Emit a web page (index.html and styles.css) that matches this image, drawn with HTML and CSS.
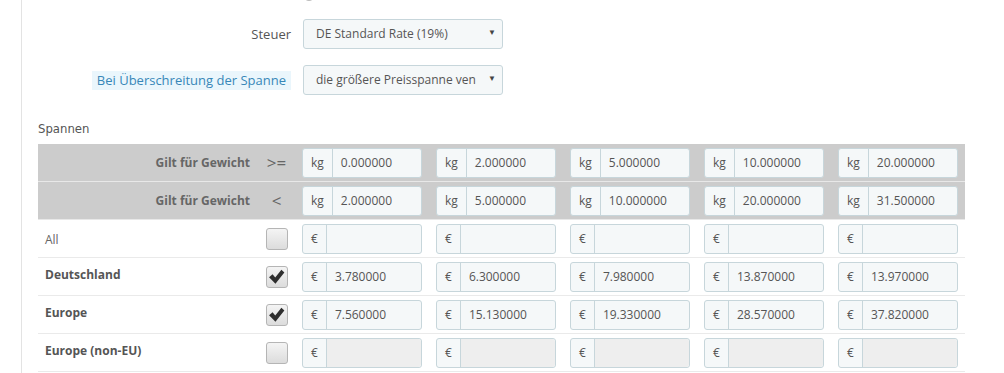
FILE: index.html
```html
<!DOCTYPE html>
<html lang="de">
<head>
    <meta charset="UTF-8">
    <title>Versandkosten</title>
    <link rel="stylesheet" href="styles.css">
</head>
<body>

<div class="panel">
    <div class="form-row radio-row">
        <div class="form-label"></div>
        <div class="form-control">
            <span class="radio"></span>
            <span class="radio-text">Versandkosten nach Gewicht</span>
        </div>
    </div>

    <div class="form-row">
        <div class="form-label">Steuer</div>
        <div class="form-control">
            <div class="select">DE Standard Rate (19%)<span class="caret">&#9660;</span></div>
        </div>
    </div>

    <div class="form-row">
        <div class="form-label"><span class="label-tooltip">Bei Überschreitung der Spanne</span></div>
        <div class="form-control">
            <div class="select">die größere Preisspanne ven<span class="caret">&#9660;</span></div>
        </div>
    </div>

    <h3 class="section-title">Spannen</h3>

    <div class="ranges">
        <div class="range-row head">
            <div class="cell-label">Gilt für Gewicht</div>
            <div class="cell-op">&gt;=</div>
            <div class="cell"><div class="input-group"><span class="addon">kg</span><span class="field">0.000000</span></div></div>
            <div class="cell"><div class="input-group"><span class="addon">kg</span><span class="field">2.000000</span></div></div>
            <div class="cell"><div class="input-group"><span class="addon">kg</span><span class="field">5.000000</span></div></div>
            <div class="cell"><div class="input-group"><span class="addon">kg</span><span class="field">10.000000</span></div></div>
            <div class="cell"><div class="input-group"><span class="addon">kg</span><span class="field">20.000000</span></div></div>
        </div>
        <div class="range-row head">
            <div class="cell-label">Gilt für Gewicht</div>
            <div class="cell-op">&lt;</div>
            <div class="cell"><div class="input-group"><span class="addon">kg</span><span class="field">2.000000</span></div></div>
            <div class="cell"><div class="input-group"><span class="addon">kg</span><span class="field">5.000000</span></div></div>
            <div class="cell"><div class="input-group"><span class="addon">kg</span><span class="field">10.000000</span></div></div>
            <div class="cell"><div class="input-group"><span class="addon">kg</span><span class="field">20.000000</span></div></div>
            <div class="cell"><div class="input-group"><span class="addon">kg</span><span class="field">31.500000</span></div></div>
        </div>

        <div class="range-row">
            <div class="cell-label zone all">All</div>
            <div class="cell-check"><span class="checkbox"></span></div>
            <div class="cell"><div class="input-group"><span class="addon">€</span><span class="field"></span></div></div>
            <div class="cell"><div class="input-group"><span class="addon">€</span><span class="field"></span></div></div>
            <div class="cell"><div class="input-group"><span class="addon">€</span><span class="field"></span></div></div>
            <div class="cell"><div class="input-group"><span class="addon">€</span><span class="field"></span></div></div>
            <div class="cell"><div class="input-group"><span class="addon">€</span><span class="field"></span></div></div>
        </div>
        <div class="range-row">
            <div class="cell-label zone">Deutschland</div>
            <div class="cell-check"><span class="checkbox"><svg viewBox="0 0 16 16" width="17" height="17"><path d="M1 8.8 L4.3 5.8 L6.8 9 L12.6 1.6 L15.4 4.2 L7 14.8 Z" fill="#2e2e2e"/></svg></span></div>
            <div class="cell"><div class="input-group"><span class="addon">€</span><span class="field">3.780000</span></div></div>
            <div class="cell"><div class="input-group"><span class="addon">€</span><span class="field">6.300000</span></div></div>
            <div class="cell"><div class="input-group"><span class="addon">€</span><span class="field">7.980000</span></div></div>
            <div class="cell"><div class="input-group"><span class="addon">€</span><span class="field">13.870000</span></div></div>
            <div class="cell"><div class="input-group"><span class="addon">€</span><span class="field">13.970000</span></div></div>
        </div>
        <div class="range-row">
            <div class="cell-label zone">Europe</div>
            <div class="cell-check"><span class="checkbox"><svg viewBox="0 0 16 16" width="17" height="17"><path d="M1 8.8 L4.3 5.8 L6.8 9 L12.6 1.6 L15.4 4.2 L7 14.8 Z" fill="#2e2e2e"/></svg></span></div>
            <div class="cell"><div class="input-group"><span class="addon">€</span><span class="field">7.560000</span></div></div>
            <div class="cell"><div class="input-group"><span class="addon">€</span><span class="field">15.130000</span></div></div>
            <div class="cell"><div class="input-group"><span class="addon">€</span><span class="field">19.330000</span></div></div>
            <div class="cell"><div class="input-group"><span class="addon">€</span><span class="field">28.570000</span></div></div>
            <div class="cell"><div class="input-group"><span class="addon">€</span><span class="field">37.820000</span></div></div>
        </div>
        <div class="range-row">
            <div class="cell-label zone">Europe (non-EU)</div>
            <div class="cell-check"><span class="checkbox"></span></div>
            <div class="cell"><div class="input-group disabled"><span class="addon">€</span><span class="field"></span></div></div>
            <div class="cell"><div class="input-group disabled"><span class="addon">€</span><span class="field"></span></div></div>
            <div class="cell"><div class="input-group disabled"><span class="addon">€</span><span class="field"></span></div></div>
            <div class="cell"><div class="input-group disabled"><span class="addon">€</span><span class="field"></span></div></div>
            <div class="cell"><div class="input-group disabled"><span class="addon">€</span><span class="field"></span></div></div>
        </div>
    </div>
</div>

</body>
</html>
```

FILE: styles.css
```css
body {
    margin: 0;
    background: #fff;
    font-family: "Open Sans", "Liberation Sans", sans-serif;
    font-size: 12px;
    color: #555;
    overflow: hidden;
}
.panel {
    margin-left: 21px;
    border-left: 1px solid #e3e3e3;
    padding-left: 16px;
    height: 400px;
}
.form-row {
    display: flex;
    align-items: center;
    height: 30px;
    margin-bottom: 16px;
}
.radio-row {
    margin-top: -27px;
    margin-bottom: 16px;
}
.form-label {
    width: 253px;
    text-align: right;
    padding-right: 12px;
    font-size: 13px;
    color: #555;
}
.form-control {
    width: 200px;
    display: flex;
    align-items: center;
}
.radio {
    width: 10px;
    height: 10px;
    border: 1px solid #bbb;
    border-radius: 50%;
    background: #ddd;
    margin-right: 8px;
    margin-top: 14px;
}
.radio-text {
    font-size: 13px;
}
.label-tooltip {
    display: inline-block;
    background: #eaf6fc;
    color: #3787b8;
    padding: 1px 5px;
    line-height: 17px;
}
.select {
    position: relative;
    width: 100%;
    height: 30px;
    box-sizing: border-box;
    border: 1px solid #c7d6db;
    border-radius: 3px;
    background: #f5f8f9;
    padding-left: 12px;
    line-height: 28px;
    font-size: 12px;
    color: #555;
}
.caret {
    position: absolute;
    right: 6px;
    top: 0;
    font-size: 8px;
    color: #444;
    line-height: 24px;
}
.section-title {
    margin: 25px 0 6px 0;
    font-family: "DejaVu Sans", sans-serif;
    font-stretch: condensed;
    font-weight: normal;
    font-size: 13px;
    color: #555;
    line-height: 18px;
}
.ranges {
    width: 927px;
}
.range-row {
    display: grid;
    grid-template-columns: 220px 37px repeat(5, 134px);
    height: 37px;
    align-items: center;
    border-bottom: 1px solid #eaeaea;
}
.range-row.head {
    background: #cccccc;
    border-bottom-color: #e8e8e8;
}
.cell-label {
    text-align: right;
    padding-right: 8px;
    font-weight: bold;
    color: #666;
}
.cell-label.zone {
    text-align: left;
    padding-left: 7px;
    padding-right: 0;
    color: #555;
    margin-top: -4px;
}
.cell-label.all {
    font-weight: normal;
    color: #666;
    margin-top: 2px;
}
.cell-op {
    text-align: center;
    font-size: 17px;
    color: #666;
}
.cell-check {
    display: flex;
    justify-content: center;
}
.checkbox {
    width: 20px;
    height: 20px;
    border: 1px solid #b5b5b5;
    border-radius: 3px;
    background: linear-gradient(#f4f4f4, #dcdcdc);
    display: flex;
    align-items: center;
    justify-content: center;
}
.cell {
    padding-left: 7px;
}
.input-group {
    display: flex;
    width: 120px;
    height: 30px;
    box-sizing: border-box;
    border: 1px solid #c7d6db;
    border-radius: 3px;
    background: #f5f8f9;
}
.addon {
    padding: 0 8px;
    border-right: 1px solid #c7d6db;
    line-height: 28px;
    color: #555;
}
.field {
    flex: 1;
    padding-left: 8px;
    line-height: 28px;
    color: #555;
}
.input-group.disabled .field {
    background: #eee;
    border-radius: 0 3px 3px 0;
}
```
